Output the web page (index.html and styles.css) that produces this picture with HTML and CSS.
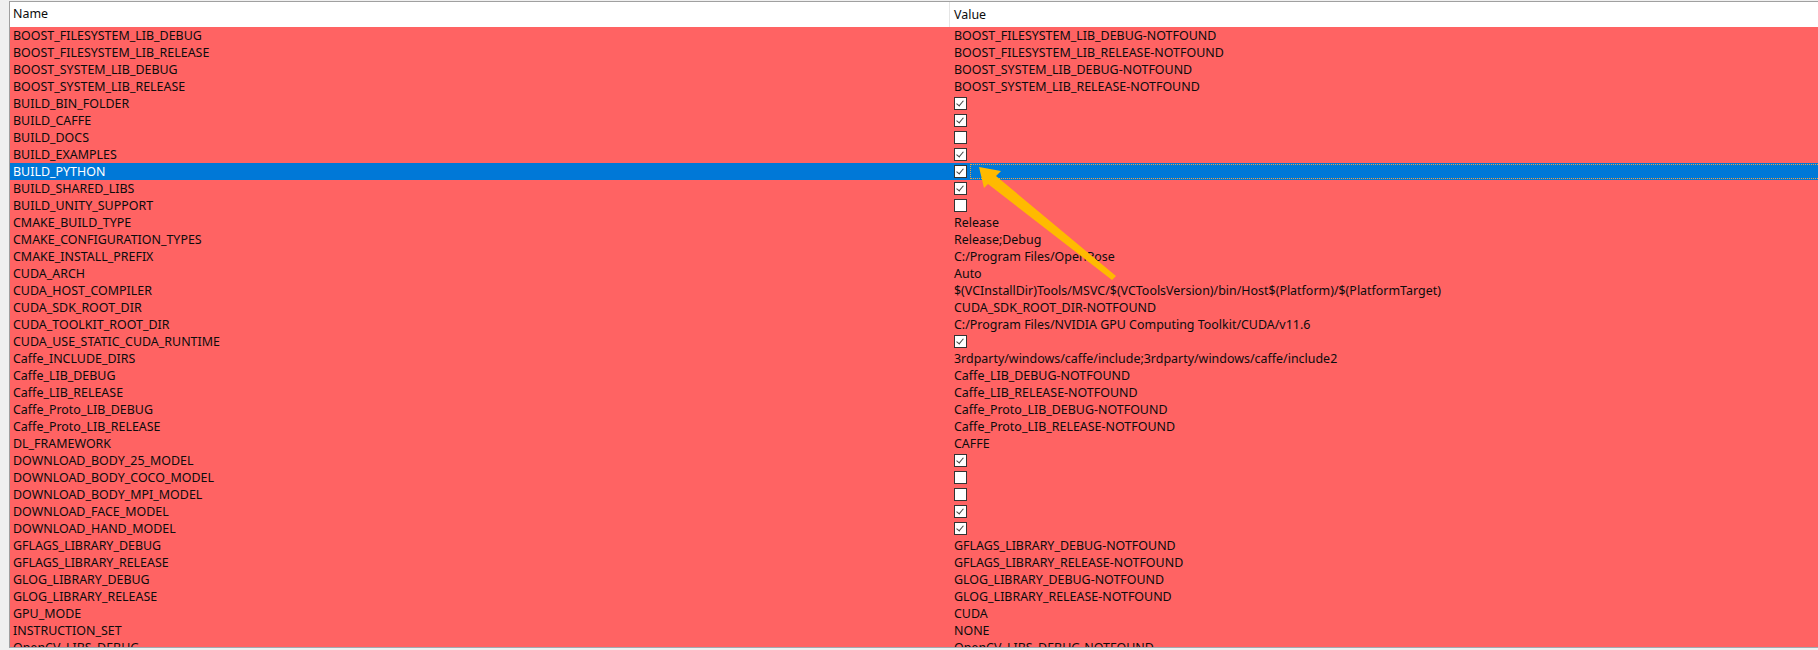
FILE: index.html
```html
<!DOCTYPE html>
<html>
<head>
<meta charset="utf-8">
<link rel="stylesheet" href="styles.css">
</head>
<body>
<div class="view">
  <div class="head">
    <div class="hname">Name</div>
    <div class="hval">Value</div>
  </div>
  <div class="rows">
    <div class="row"><div class="name">BOOST_FILESYSTEM_LIB_DEBUG</div><div class="val">BOOST_FILESYSTEM_LIB_DEBUG-NOTFOUND</div></div>
    <div class="row"><div class="name">BOOST_FILESYSTEM_LIB_RELEASE</div><div class="val">BOOST_FILESYSTEM_LIB_RELEASE-NOTFOUND</div></div>
    <div class="row"><div class="name">BOOST_SYSTEM_LIB_DEBUG</div><div class="val">BOOST_SYSTEM_LIB_DEBUG-NOTFOUND</div></div>
    <div class="row"><div class="name">BOOST_SYSTEM_LIB_RELEASE</div><div class="val">BOOST_SYSTEM_LIB_RELEASE-NOTFOUND</div></div>
    <div class="row"><div class="name">BUILD_BIN_FOLDER</div><div class="val"><span class="cb on"></span></div></div>
    <div class="row"><div class="name">BUILD_CAFFE</div><div class="val"><span class="cb on"></span></div></div>
    <div class="row"><div class="name">BUILD_DOCS</div><div class="val"><span class="cb"></span></div></div>
    <div class="row"><div class="name">BUILD_EXAMPLES</div><div class="val"><span class="cb on"></span></div></div>
    <div class="row sel"><div class="name">BUILD_PYTHON</div><div class="val"><span class="cb on"></span><span class="focus"></span></div></div>
    <div class="row"><div class="name">BUILD_SHARED_LIBS</div><div class="val"><span class="cb on"></span></div></div>
    <div class="row"><div class="name">BUILD_UNITY_SUPPORT</div><div class="val"><span class="cb"></span></div></div>
    <div class="row"><div class="name">CMAKE_BUILD_TYPE</div><div class="val">Release</div></div>
    <div class="row"><div class="name">CMAKE_CONFIGURATION_TYPES</div><div class="val">Release;Debug</div></div>
    <div class="row"><div class="name">CMAKE_INSTALL_PREFIX</div><div class="val">C:/Program Files/OpenPose</div></div>
    <div class="row"><div class="name">CUDA_ARCH</div><div class="val">Auto</div></div>
    <div class="row"><div class="name">CUDA_HOST_COMPILER</div><div class="val">$(VCInstallDir)Tools/MSVC/$(VCToolsVersion)/bin/Host$(Platform)/$(PlatformTarget)</div></div>
    <div class="row"><div class="name">CUDA_SDK_ROOT_DIR</div><div class="val">CUDA_SDK_ROOT_DIR-NOTFOUND</div></div>
    <div class="row"><div class="name">CUDA_TOOLKIT_ROOT_DIR</div><div class="val">C:/Program Files/NVIDIA GPU Computing Toolkit/CUDA/v11.6</div></div>
    <div class="row"><div class="name">CUDA_USE_STATIC_CUDA_RUNTIME</div><div class="val"><span class="cb on"></span></div></div>
    <div class="row"><div class="name">Caffe_INCLUDE_DIRS</div><div class="val">3rdparty/windows/caffe/include;3rdparty/windows/caffe/include2</div></div>
    <div class="row"><div class="name">Caffe_LIB_DEBUG</div><div class="val">Caffe_LIB_DEBUG-NOTFOUND</div></div>
    <div class="row"><div class="name">Caffe_LIB_RELEASE</div><div class="val">Caffe_LIB_RELEASE-NOTFOUND</div></div>
    <div class="row"><div class="name">Caffe_Proto_LIB_DEBUG</div><div class="val">Caffe_Proto_LIB_DEBUG-NOTFOUND</div></div>
    <div class="row"><div class="name">Caffe_Proto_LIB_RELEASE</div><div class="val">Caffe_Proto_LIB_RELEASE-NOTFOUND</div></div>
    <div class="row"><div class="name">DL_FRAMEWORK</div><div class="val">CAFFE</div></div>
    <div class="row"><div class="name">DOWNLOAD_BODY_25_MODEL</div><div class="val"><span class="cb on"></span></div></div>
    <div class="row"><div class="name">DOWNLOAD_BODY_COCO_MODEL</div><div class="val"><span class="cb"></span></div></div>
    <div class="row"><div class="name">DOWNLOAD_BODY_MPI_MODEL</div><div class="val"><span class="cb"></span></div></div>
    <div class="row"><div class="name">DOWNLOAD_FACE_MODEL</div><div class="val"><span class="cb on"></span></div></div>
    <div class="row"><div class="name">DOWNLOAD_HAND_MODEL</div><div class="val"><span class="cb on"></span></div></div>
    <div class="row"><div class="name">GFLAGS_LIBRARY_DEBUG</div><div class="val">GFLAGS_LIBRARY_DEBUG-NOTFOUND</div></div>
    <div class="row"><div class="name">GFLAGS_LIBRARY_RELEASE</div><div class="val">GFLAGS_LIBRARY_RELEASE-NOTFOUND</div></div>
    <div class="row"><div class="name">GLOG_LIBRARY_DEBUG</div><div class="val">GLOG_LIBRARY_DEBUG-NOTFOUND</div></div>
    <div class="row"><div class="name">GLOG_LIBRARY_RELEASE</div><div class="val">GLOG_LIBRARY_RELEASE-NOTFOUND</div></div>
    <div class="row"><div class="name">GPU_MODE</div><div class="val">CUDA</div></div>
    <div class="row"><div class="name">INSTRUCTION_SET</div><div class="val">NONE</div></div>
    <div class="row"><div class="name">OpenCV_LIBS_DEBUG</div><div class="val">OpenCV_LIBS_DEBUG-NOTFOUND</div></div>
  </div>
  <svg class="arrow" width="1818" height="650" viewBox="0 0 1818 650">
    <polygon points="979,167 1001,171 996,176 1116,276 1112,280 988,184 984,188" fill="#FFBA00"/>
  </svg>
</div>
</body>
</html>
```

FILE: styles.css
```css
html, body {
  margin: 0;
  padding: 0;
}
body {
  background: #f0f0f0;
  width: 1818px;
  height: 650px;
  overflow: hidden;
  font-family: "Noto Sans", "Open Sans", sans-serif;
  font-size: 12.45px;
  color: #0c0c0c;
}
.view {
  margin: 1px 0 0 9px;
  height: 645px;
  border-top: 1px solid #a0a0a0;
  border-left: 1px solid #a0a0a0;
  border-bottom: 1px solid #a3a8b0;
  background: #ff6363;
  overflow: hidden;
}
.head {
  display: flex;
  height: 25px;
  background: #fff;
  align-items: center;
}
.hname {
  width: 940px;
  padding-left: 3px;
  box-sizing: border-box;
  height: 25px;
  line-height: 24px;
  border-right: 1px solid #e5e5e5;
}
.hval {
  padding-left: 4px;
  line-height: 24px;
}
.rows {
  display: flex;
  flex-direction: column;
}
.row {
  display: flex;
  height: 17px;
  line-height: 17px;
  white-space: nowrap;
}
.name {
  width: 940px;
  flex: none;
  padding-left: 3px;
  box-sizing: border-box;
}
.val {
  flex: 1;
  padding-left: 4px;
  display: flex;
  align-items: center;
}
.sel {
  background: #0078d7;
  color: #fff;
}
.cb {
  width: 11px;
  height: 11px;
  border: 1px solid #333;
  background: #fff;
  flex: none;
  position: relative;
}
.cb.on::after {
  content: "";
  position: absolute;
  left: 3px;
  top: 1px;
  width: 3px;
  height: 6px;
  border-right: 1.5px solid #444;
  border-bottom: 1.5px solid #444;
  transform: rotate(40deg);
}
.focus {
  flex: 1;
  height: 15px;
  margin-left: 3px;
  border: 1px dotted #f0a040;
  border-right: none;
  box-sizing: border-box;
}
.arrow {
  position: absolute;
  left: 0;
  top: 0;
  pointer-events: none;
}
```
